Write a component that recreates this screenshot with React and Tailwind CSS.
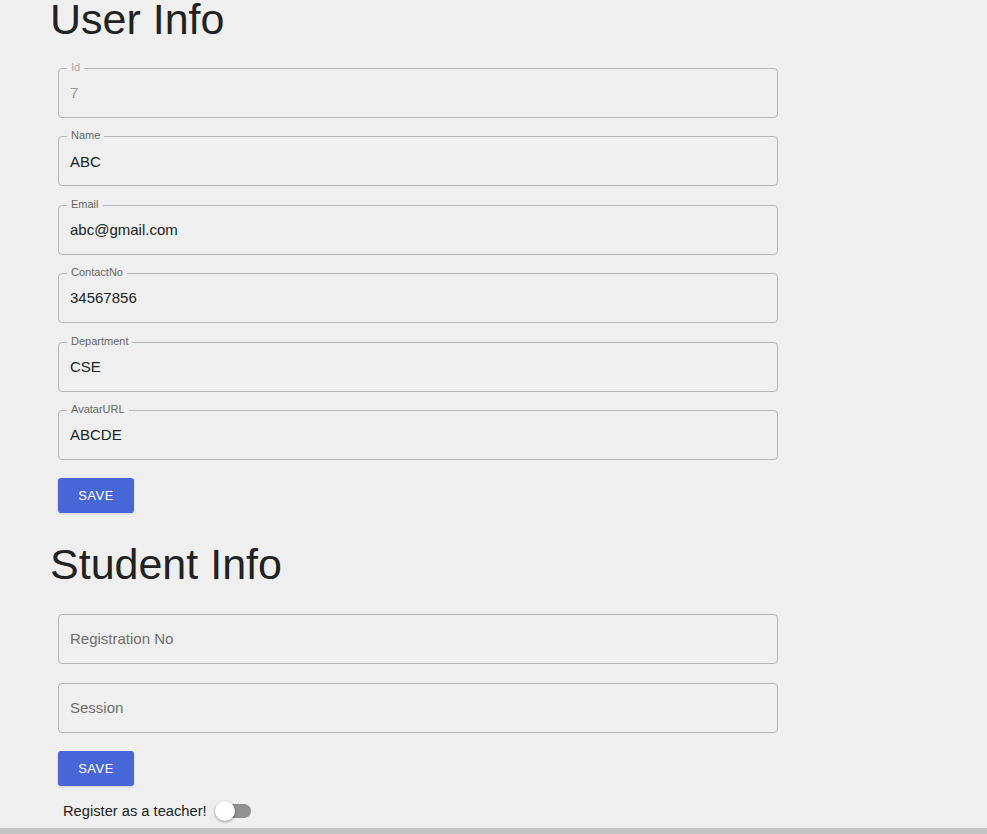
import React from "react";

const font = { fontFamily: '"Liberation Sans", Arial, sans-serif' };

function Field({ label, value, disabled, placeholder }) {
  return (
    <div className="relative h-[50px] w-[720px] rounded-[4px] border border-[#b5b5b5] flex items-center pl-[11px] pt-[1px]">
      {label && (
        <span
          className={`absolute top-[-9px] left-[8px] px-[4px] bg-[#efefef] text-[11px] leading-[14px] ${
            disabled ? "text-[#a9a9a9]" : "text-[#666666]"
          }`}
        >
          {label}
        </span>
      )}
      {placeholder ? (
        <span className="text-[15px] text-[#6e6e6e]">{placeholder}</span>
      ) : (
        <span className={`text-[15px] ${disabled ? "text-[#9b9b9b]" : "text-[#222222]"}`}>{value}</span>
      )}
    </div>
  );
}

function SaveButton() {
  return (
    <button className="h-[35px] w-[76px] rounded-[3px] bg-[#4767d6] text-white text-[13px] tracking-[0.5px] shadow-sm">
      SAVE
    </button>
  );
}

export default function App() {
  return (
    <div className="h-[834px] w-full overflow-hidden flex flex-col bg-[#efefef]" style={font}>
      <div className="flex-1 pl-[50px]">
        <h1 className="text-[43px] leading-[39px] text-[#222222]">User Info</h1>
        <div className="ml-[8px] mt-[29px] flex flex-col gap-[18.4px]">
          <Field label="Id" value="7" disabled />
          <Field label="Name" value="ABC" />
          <Field label="Email" value="abc@gmail.com" />
          <Field label="ContactNo" value="34567856" />
          <Field label="Department" value="CSE" />
          <Field label="AvatarURL" value="ABCDE" />
        </div>
        <div className="ml-[8px] mt-[18px]">
          <SaveButton />
        </div>
        <h1 className="mt-[30px] text-[43px] leading-[43px] text-[#222222]">Student Info</h1>
        <div className="ml-[8px] mt-[28px] flex flex-col gap-[19px]">
          <Field placeholder="Registration No" />
          <Field placeholder="Session" />
        </div>
        <div className="ml-[8px] mt-[18px]">
          <SaveButton />
        </div>
        <div className="ml-[13px] mt-[15px] h-[20px] flex items-center gap-[8px]">
          <span className="text-[14.7px] text-[#222222]">Register as a teacher!</span>
          <div className="relative w-[36px] h-[20px] flex items-center">
            <div className="absolute left-[1px] right-0 h-[14px] rounded-full bg-[#919191]" />
            <div className="absolute left-0 h-[20px] w-[20px] rounded-full bg-white shadow-[0_1px_3px_rgba(0,0,0,0.4)]" />
          </div>
        </div>
      </div>
      <div className="h-[6px] w-full bg-[#c4c4c4]" />
    </div>
  );
}
